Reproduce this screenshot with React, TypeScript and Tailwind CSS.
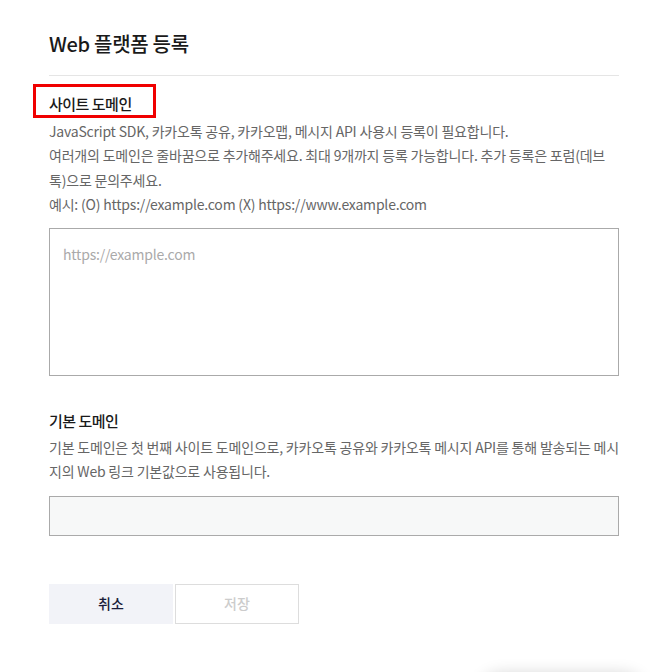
export default function App() {
  return (
    <div
      className="relative min-h-[672px] bg-white text-[#1a1a1a]"
      style={{ fontFamily: '"Noto Sans CJK KR", "Noto Sans", sans-serif' }}
    >
      <div className="w-[570px] ml-[49px] pt-[30px]">
        <h1 className="text-[20px] leading-[28px] font-medium tracking-[-0.3px]">Web 플랫폼 등록</h1>
        <div className="mt-[17px] h-px bg-[#e5e5e5]" />

        <div className="mt-[17px] relative inline-block">
          <span className="absolute -left-[16px] -top-[9px] w-[123px] h-[34px] border-[3px] border-[#f00000]" />
          <h2 className="text-[15px] leading-[22px] font-medium tracking-[-0.5px]">사이트 도메인</h2>
        </div>
        <p className="mt-[4px] text-[14px] leading-[24.4px] text-[#666] tracking-[-0.2px]">
          JavaScript SDK, 카카오톡 공유, 카카오맵, 메시지 API 사용시 등록이 필요합니다.
          <br />
          여러개의 도메인은 줄바꿈으로 추가해주세요. 최대 9개까지 등록 가능합니다. 추가 등록은 포럼(데브톡)으로 문의주세요.
          <br />
          예시: (O) https://example.com (X) https://www.example.com
        </p>
        <textarea
          placeholder="https://example.com"
          className="mt-[11px] block w-full h-[148px] border border-[#aaa] px-[13px] py-[15px] text-[14px] leading-[20px] resize-none outline-none placeholder:text-[#aaa] tracking-[-0.2px]"
        />

        <h2 className="mt-[34px] text-[15px] leading-[22px] font-medium tracking-[-0.5px]">기본 도메인</h2>
        <p className="mt-[3px] text-[14px] leading-[24.5px] text-[#666] tracking-[-0.2px]">
          기본 도메인은 첫 번째 사이트 도메인으로, 카카오톡 공유와 카카오톡 메시지 API를 통해 발송되는 메시지의 Web 링크 기본값으로 사용됩니다.
        </p>
        <div className="mt-[12px] h-[40px] border border-[#aaa] bg-[#f7f8f8]" />

        <div className="mt-[48px] flex gap-[2px]">
          <button className="w-[124px] h-[40px] bg-[#f2f3f8] text-[14px] font-medium text-[#1b1d3a]">취소</button>
          <button className="w-[124px] h-[40px] border border-[#ddd] bg-white text-[14px] font-medium text-[#ccc]">저장</button>
        </div>
      </div>

      <div className="fixed left-[478px] top-[674px] w-[168px] h-[48px] rounded-[24px] bg-white shadow-[0_0_16px_rgba(0,0,0,0.18)]" />
    </div>
  );
}
